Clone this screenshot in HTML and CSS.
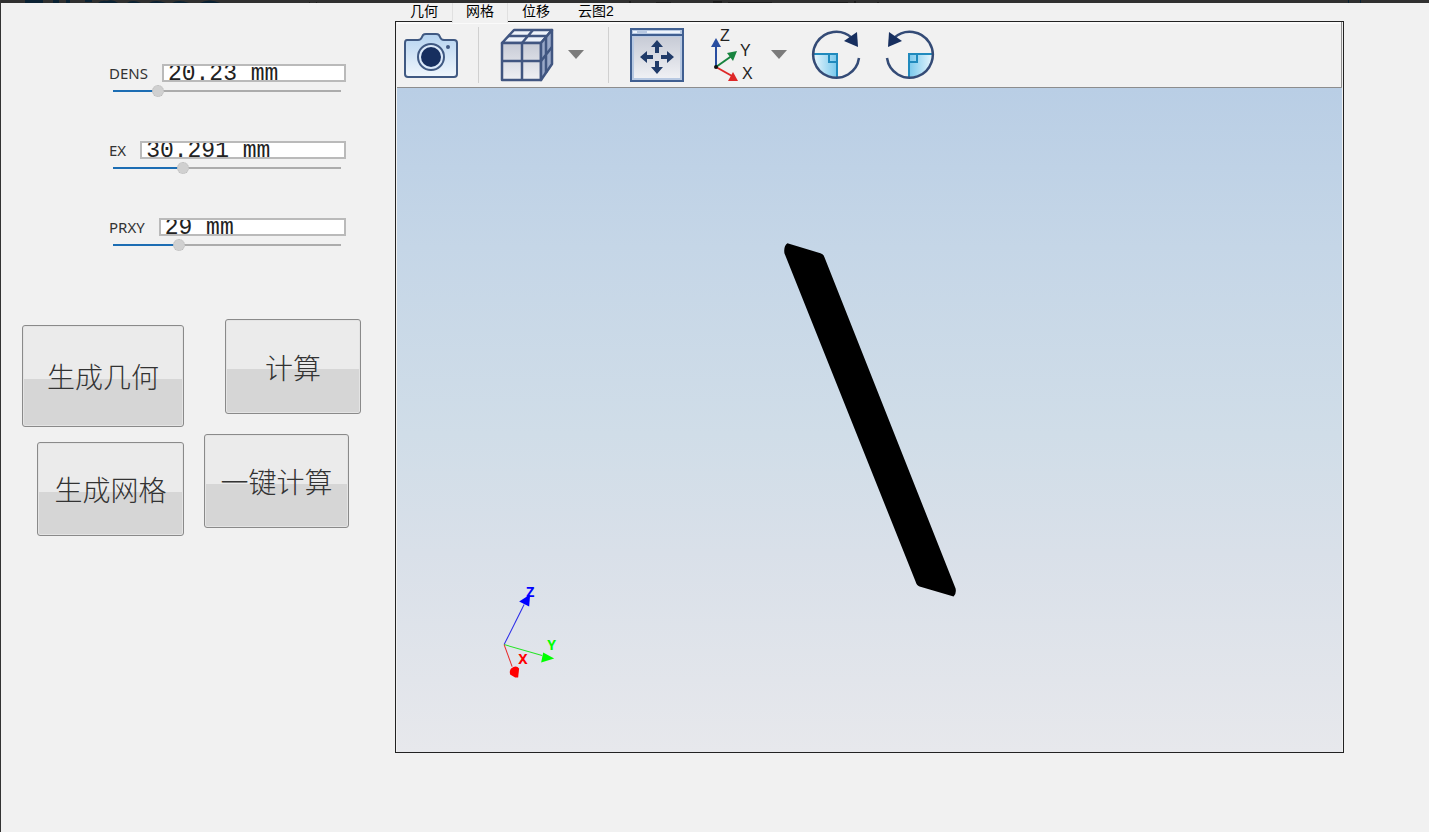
FILE: index.html
```html
<!DOCTYPE html>
<html lang="zh-CN">
<head>
<meta charset="utf-8">
<title>网格</title>
<link rel="stylesheet" href="styles.css">
</head>
<body>
<div class="window">
  <div class="strip">
    <svg class="strip-marks" width="1429" height="3" aria-hidden="true">
      <g fill="#0b2233"><rect x="24" width="18" height="3"/><rect x="52" width="6" height="3"/><rect x="65" width="4" height="3"/><rect x="84" width="7" height="2"/><path d="M97 3q3-3 9-2q6-2 11 2zM126 3q5-4 14 0zM148 3q6-4 17 0zM171 3q6-4 17 0zM199 3q9-5 20 0z"/><rect x="1347" width="1" height="3"/><rect x="1359" width="1" height="3"/></g>
      <g fill="#1c1c1c"><rect x="308" y="2" width="1" height="1"/><rect x="315" y="2" width="1" height="1"/><rect x="628" y="1" width="2" height="2"/><rect x="655" y="2" width="15" height="1"/><rect x="712" y="1" width="9" height="2"/><rect x="727" y="2" width="44" height="1"/><rect x="829" y="2" width="18" height="1"/><rect x="853" y="1" width="2" height="2"/><rect x="876" y="2" width="2" height="1"/></g>
    </svg>
  </div>
  <div class="content">
    <aside class="panel">
      <form class="params">
        <div class="param">
          <div class="param-row"><label for="dens">DENS</label><input class="value" id="dens" type="text" value="20.23 mm"></div>
          <input class="slider" type="range" min="0" max="100" step="any" value="18" aria-label="DENS" style="--pos:18%">
        </div>
        <div class="param">
          <div class="param-row"><label for="ex">EX</label><input class="value" id="ex" type="text" value="30.291 mm"></div>
          <input class="slider" type="range" min="0" max="100" step="any" value="29.5" aria-label="EX" style="--pos:29.5%">
        </div>
        <div class="param">
          <div class="param-row"><label for="prxy">PRXY</label><input class="value" id="prxy" type="text" value="29 mm"></div>
          <input class="slider" type="range" min="0" max="100" step="any" value="28" aria-label="PRXY" style="--pos:28%">
        </div>
      </form>
      <div class="actions">
        <div class="actions-left">
          <button class="action geometry" type="button">生成几何</button>
          <button class="action mesh" type="button">生成网格</button>
        </div>
        <div class="actions-right">
          <button class="action solve" type="button">计算</button>
          <button class="action solve-all" type="button">一键计算</button>
        </div>
      </div>
    </aside>
    <main class="viewer">
      <div class="tabs" role="tablist">
        <button class="tab" role="tab" type="button">几何</button>
        <button class="tab active" role="tab" type="button" aria-selected="true">网格</button>
        <button class="tab" role="tab" type="button">位移</button>
        <button class="tab" role="tab" type="button">云图2</button>
      </div>
      <div class="frame">
        <div class="toolbar">
          <button class="tool" type="button" aria-label="截图">
            <svg width="54" height="54" viewBox="0 0 54 54">
              <defs><linearGradient id="cam" x1="0" y1="0" x2="0" y2="1"><stop offset="0" stop-color="#b5d3f0"/><stop offset="1" stop-color="#f0f6fc"/></linearGradient></defs>
              <path d="M3 12h11q3 0 4-3l1-2q1-1 3-1h10q2 0 3 1l1 2q1 3 4 3h10q3 0 3 3v31q0 3-3 3H4q-3 0-3-3V15q0-3 2-3z" fill="url(#cam)" stroke="#405982" stroke-width="2"/>
              <circle cx="27" cy="29" r="13" fill="#dceafa" stroke="#405982" stroke-width="2"/>
              <circle cx="27" cy="29" r="10" fill="#172f5f"/><circle cx="44" cy="19" r="2" fill="#405982"/>
            </svg>
          </button>
          <span class="separator"></span>
          <button class="tool" type="button" aria-label="视图样式">
            <svg width="54" height="54" viewBox="0 0 54 54">
              <defs><linearGradient id="cube" x1="0" y1="0" x2="0" y2="1"><stop offset="0" stop-color="#c7cbd6"/><stop offset="1" stop-color="#eff0f4"/></linearGradient></defs>
              <g stroke="#415681" stroke-width="2.5" stroke-linejoin="round"><path d="M2 15L14 2h38L41 15z" fill="#edf2fa"/><path d="M2 15h39v37H2z" fill="url(#cube)"/><path d="M41 15L52 2v34L41 52z" fill="#9aa9c8"/><path d="M22 52V15L33 2M2 33h39l11-14M8 8h38v37" fill="none"/></g>
            </svg>
          </button>
          <button class="drop cube-drop" type="button" aria-label="更多样式"><svg width="16" height="9"><path d="M0 0h16L8 9z" fill="#7b7b7b"/></svg></button>
          <span class="separator"></span>
          <button class="tool" type="button" aria-label="适应窗口">
            <svg width="54" height="54" viewBox="0 0 54 54">
              <rect x="1" y="1" width="52" height="52" fill="#b8c9e2" stroke="#405f91" stroke-width="2"/><path d="M2 7h50" stroke="#405f91" stroke-width="2"/><path d="M3 4h4M17 4h33" stroke="#eef4fc" stroke-width="2"/><rect x="4" y="9" width="46" height="41" fill="url(#cube)"/>
              <g fill="#203b69"><path d="M27 12l6 7h-4v6h-4v-6h-4zM27 46l6-7h-4v-6h-4v6h-4zM10 29l7-6v4h6v4h-6v4zM44 29l-7-6v4h-6v4h6v4z"/></g>
            </svg>
          </button>
          <button class="tool axes" type="button" aria-label="视图方向">
            <svg width="44" height="54" viewBox="0 0 44 54">
              <path d="M5 39V16" stroke="#284da0" stroke-width="2"/><path d="M5 10l5 9H0z" fill="#284da0"/>
              <path d="M5 39l17-12" stroke="#18843f" stroke-width="2"/><path d="M26 23l-4 10-6-8z" fill="#18843f"/>
              <path d="M5 39l16 9" stroke="#de2828" stroke-width="2"/><path d="M27 53H17l5-9z" fill="#de2828"/><circle cx="5" cy="39" r="2" fill="#111"/>
              <g class="axis-name"><text x="9" y="13">Z</text><text x="29" y="28">Y</text><text x="31" y="51">X</text></g>
            </svg>
          </button>
          <button class="drop" type="button" aria-label="更多方向"><svg width="16" height="9"><path d="M0 0h16L8 9z" fill="#7b7b7b"/></svg></button>
          <button class="tool rotate" type="button" aria-label="顺时针旋转">
            <svg width="50" height="54" viewBox="0 0 50 54">
              <defs><linearGradient id="turn"><stop offset="0" stop-color="#e4f5fd"/><stop offset="1" stop-color="#78c8ec"/></linearGradient></defs>
              <path d="M3 27h23v22Q6 48 3 27z" fill="url(#turn)"/><path d="M2 26h24v24M18 26v8h8" fill="none" stroke="#208abd" stroke-width="2"/>
              <path d="M48 30A23 23 0 1 1 41 10" fill="none" stroke="#344b76" stroke-width="2.5"/><path d="M46 4l1 15-14-6z" fill="#172f5f"/>
            </svg>
          </button>
          <button class="tool rotate" type="button" aria-label="逆时针旋转">
            <svg width="50" height="54" viewBox="0 0 50 54"><g transform="matrix(-1 0 0 1 50 0)">
              <path d="M3 27h23v22Q6 48 3 27z" fill="url(#turn)"/><path d="M2 26h24v24M18 26v8h8" fill="none" stroke="#208abd" stroke-width="2"/>
              <path d="M48 30A23 23 0 1 1 41 10" fill="none" stroke="#344b76" stroke-width="2.5"/><path d="M46 4l1 15-14-6z" fill="#172f5f"/></g>
            </svg>
          </button>
        </div>
        <div class="viewport">
          <svg class="scene" viewBox="0 0 944 663" role="img" aria-label="模型">
            <path d="M390 155L423 165Q426 166 427 169L558 500Q559 505 556 508L522 498Q519 497 518 493L387 165Q386 158 390 155z"/>
            <g fill="none"><path d="M107 556L127 516" stroke="#2929e8"/><path d="M107 556L145 567" stroke="#24e424"/><path d="M107 556L115 578" stroke="#e82929"/></g>
            <path d="M133 506L132 518 122 513z" fill="#00f"/><path d="M157 570L144 574 146 564z" fill="#0f0"/><path d="M114 580Q119 576 122 580L121 589H118L113 586Q112 582 114 580z" fill="red"/>
            <g class="scene-label"><text x="129" y="508" fill="#00f">Z</text><text x="150" y="561" fill="#0f0">Y</text><text x="121" y="575" fill="red">X</text></g>
          </svg>
        </div>
      </div>
    </main>
  </div>
</div>
</body>
</html>
```
FILE: styles.css
```css
* { box-sizing: border-box; }
body { margin: 0; background: #f1f1f1; color: #333; font-family: "Noto Sans", "Noto Sans CJK SC", sans-serif; }
button { margin: 0; padding: 0; border: 0; background: none; color: inherit; font: inherit; }
svg { display: block; }

.window { display: flex; flex-direction: column; min-height: 100vh; border-left: 1px solid #333; border-bottom: 1px solid #333; }
.strip { height: 3px; background: #303030; overflow: hidden; }
.content { display: flex; flex: 1; }

.panel { flex: none; width: 394px; }
.params { display: flex; flex-direction: column; gap: 41px; margin: 60px 49px 0 108px; }
.param-row { display: flex; align-items: center; gap: 14px; height: 19px; }
.param-row label { font-size: 15px; line-height: 18px; }
.value { flex: 1; min-width: 0; height: 18px; padding: 3px 4px 0; border: 2px solid #bababa; background: #fff; color: #222; font-family: "Liberation Mono", monospace; font-size: 23px; line-height: 23px; }
.slider { appearance: none; display: block; width: calc(100% - 9px); height: 17px; margin: 0 4px; background: linear-gradient(#1c6db3, #1c6db3) 0 50% / var(--pos) 2px no-repeat, linear-gradient(#acacac, #acacac) 0 50% / 100% 2px no-repeat; }
.slider::-webkit-slider-thumb { appearance: none; width: 12px; height: 12px; border: 1px dotted #bbb; border-radius: 50%; background: #d0d0d0; }

.actions { display: flex; gap: 20px; margin: 66px 30px 0 21px; }
.actions-left { display: flex; flex-direction: column; align-items: flex-end; gap: 15px; padding-top: 6px; }
.actions-right { display: flex; flex-direction: column; align-items: flex-start; gap: 20px; }
.action { border: 1px solid #8a8a8a; border-radius: 3px; background: linear-gradient(#ebebeb 0 53%, #d6d6d6 53%); box-shadow: inset 0 0 0 1px #e4e4e4; font-family: "Noto Sans CJK SC", sans-serif; font-size: 28px; font-weight: 300; line-height: 40px; }
.geometry { width: 162px; height: 102px; }
.mesh { width: 147px; height: 94px; }
.solve { width: 136px; height: 95px; margin-left: 21px; }
.solve-all { width: 145px; height: 94px; }

.viewer { display: flex; flex: 1; flex-direction: column; min-width: 0; margin: 0 85px 79px 0; }
.tabs { display: flex; height: 18px; padding-left: 1px; }
.tab { padding: 0 14px; color: #000; font-family: "Liberation Sans", "Noto Sans CJK SC", sans-serif; font-size: 14px; line-height: 16px; padding-bottom: 2px; }
.tab.active { z-index: 1; height: 20px; padding: 0 13px 4px; border: 1px solid #e0e0e0; border-width: 0 1px; background: #f1f1f1; }
.frame { display: flex; flex: 1; flex-direction: column; padding: 0 1px 0 1px; border: 1px solid #222; }
.toolbar { display: flex; align-items: center; height: 66px; padding-left: 7px; border: solid #8d8d8d; border-width: 0 1px 1px 0; box-shadow: inset 0 2px #fafafa; }
.separator { width: 1px; height: 56px; margin: 0 21px 0 20px; background: #d0d0d0; }
.drop { margin-left: 14px; }
.cube-drop { margin-right: 4px; }
.axes { margin-left: 27px; }
.axes + .drop { margin-left: 16px; }
.rotate { margin-left: 24px; }
.axis-name { fill: #222; font-family: "Liberation Sans", sans-serif; font-size: 16px; }
.viewport { display: flex; flex: 1; min-height: 0; background: linear-gradient(#b9cee5, #c5d6e7 24%, #d0dde8 52%, #d9e0e9 70%, #e7e8ec); }
.scene { width: 100%; height: 100%; }
.scene-label { font-family: "Noto Sans", sans-serif; font-size: 14px; font-weight: 700; }
```
